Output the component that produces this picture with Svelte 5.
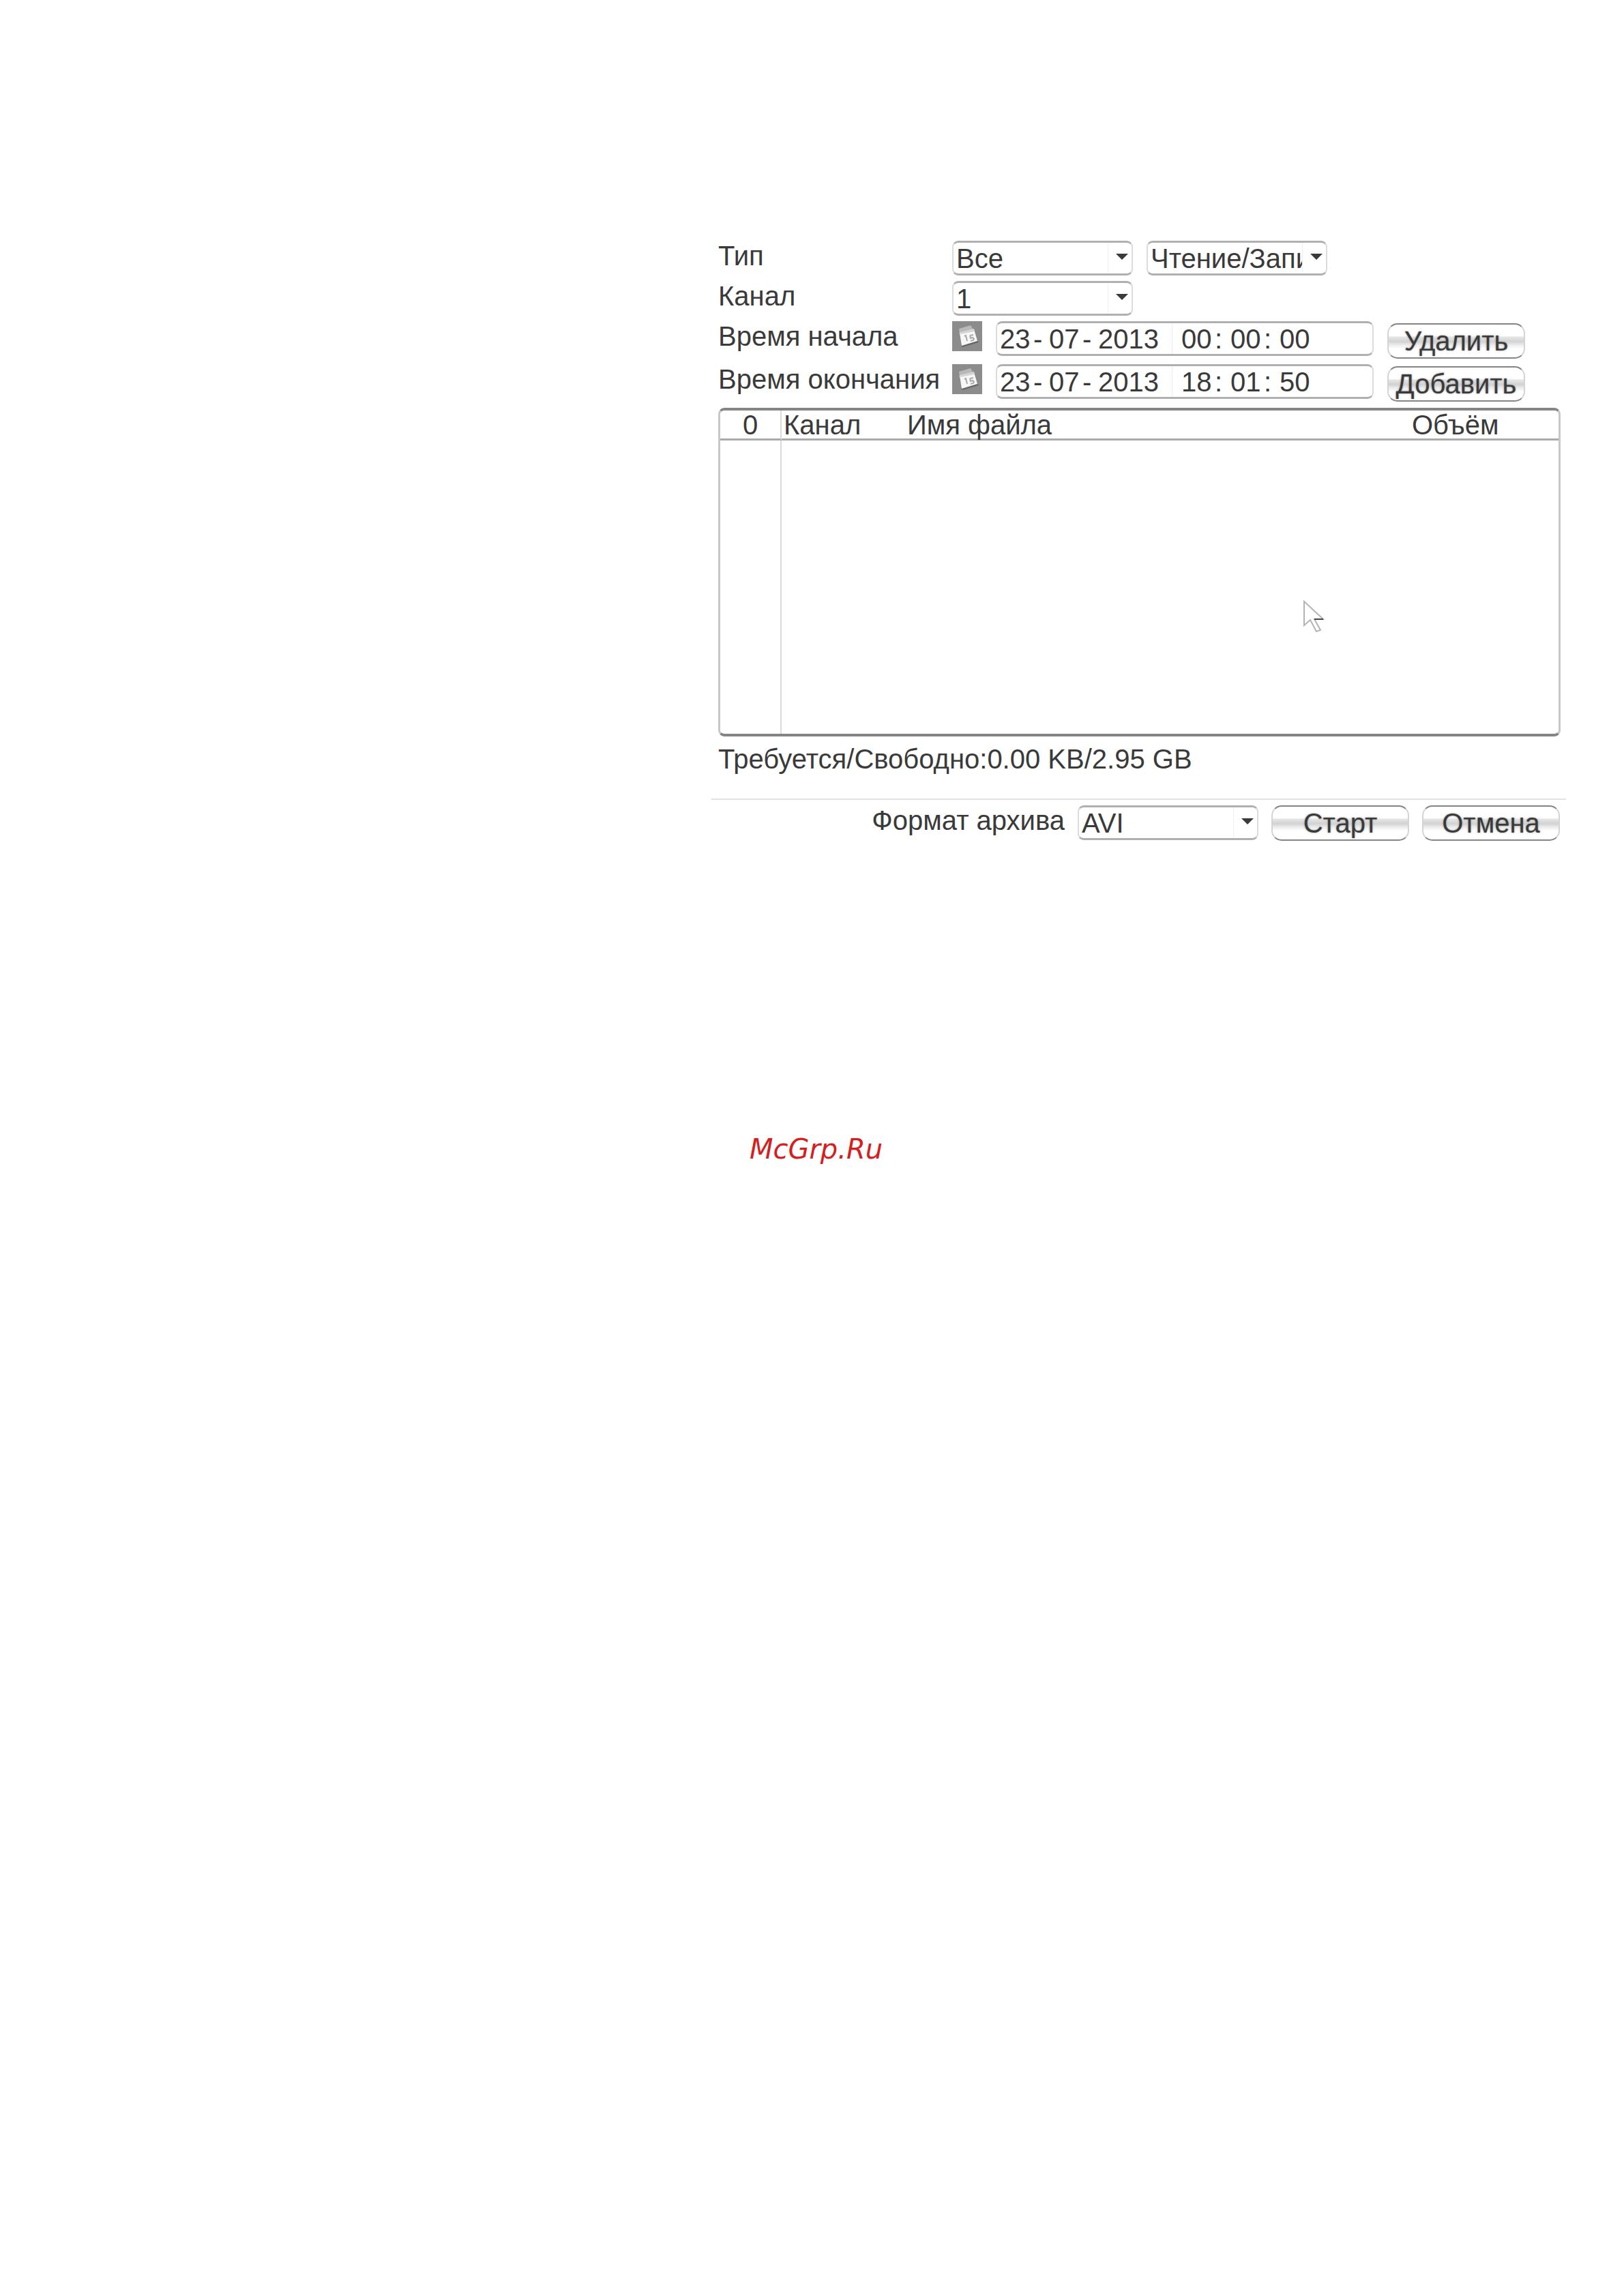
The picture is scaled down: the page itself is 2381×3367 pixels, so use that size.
<script lang="ts">
	interface TimeRow {
		id: string;
		label: string;
		date: string[];
		time: string[];
		action: string;
	}

	const rows: TimeRow[] = [
		{ id: "start", label: "Время начала", date: ["23", "07", "2013"], time: ["00", "00", "00"], action: "Удалить" },
		{ id: "end", label: "Время окончания", date: ["23", "07", "2013"], time: ["18", "01", "50"], action: "Добавить" },
	];

	const dateParts = ["день", "месяц", "год"];
	const timeParts = ["часы", "минуты", "секунды"];

	let fileCount = $state(0);
	let required = $state("0.00 KB");
	let free = $state("2.95 GB");
</script>

{#snippet parts(values: string[], names: string[], separator: string, label: string)}
	{#each values as value, i}
		<input class="part" class:year={value.length === 4} {value} aria-label="{label}: {names[i]}" />
		{#if i < values.length - 1}
			<span class="separator">{separator}</span>
		{/if}
	{/each}
{/snippet}

<main class="page">
	<form class="panel">
		<div class="fields">
			<div class="row">
				<label for="type">Тип</label>
				<span class="select">
					<select id="type"><option>Все</option></select>
				</span>
				<span class="select">
					<select aria-label="Режим"><option>Чтение/Запись</option></select>
				</span>
			</div>
			<div class="row">
				<label for="channel">Канал</label>
				<span class="select">
					<select id="channel"><option>1</option></select>
				</span>
			</div>
			{#each rows as row (row.id)}
				<div class="row time-row">
					<span class="label">{row.label}</span>
					<button type="button" class="calendar" aria-label="Календарь">
						<svg viewBox="0 0 44 44">
							<rect width="44" height="44" fill="#8c8c8c" />
							<path d="M13 35 15 38 39 31 36 27Z" fill="#666" />
							<path d="M10 11 27 6 33 16 11 20Z" fill="#b8b8b8" />
							<path d="M11 17 32 12 37 29 14 36Z" fill="#f8f8f8" />
							<path d="M11 16 32 11 33 15 12 19Z" fill="#d4d4d4" />
							<path d="M18 22 20 21 22 29M26 21 31 20M26 21 27 25 30 24 32 26 31 28 27 29" fill="none" stroke="#aaa" stroke-width="2" />
						</svg>
					</button>
					<div class="datetime" role="group" aria-label={row.label}>
						<span class="date">{@render parts(row.date, dateParts, "-", row.label)}</span>
						<span class="time">{@render parts(row.time, timeParts, ":", row.label)}</span>
					</div>
					<button type="button" class="button">{row.action}</button>
				</div>
			{/each}
		</div>

		<div class="files">
			<table>
				<thead>
					<tr>
						<th class="count">{fileCount}</th>
						<th class="channel">Канал</th>
						<th>Имя файла</th>
						<th class="size">Объём</th>
					</tr>
				</thead>
				<tbody>
					<tr>
						<td class="count"></td>
						<td colspan="3"></td>
					</tr>
				</tbody>
			</table>
			<svg class="pointer" viewBox="0 0 32 50" aria-hidden="true">
				<path d="M2 2V37L11 29L20 46L26 44L17 28H30Z" fill="#fff" stroke="#b4b4b4" stroke-width="2" />
				<path d="M17 28H30" stroke="#444" stroke-width="2" />
			</svg>
		</div>

		<p class="space">Требуется/Свободно:{required}/{free}</p>

		<div class="footer">
			<label for="format">Формат архива</label>
			<span class="select">
				<select id="format"><option>AVI</option></select>
			</span>
			<button type="button" class="button">Старт</button>
			<button type="button" class="button">Отмена</button>
		</div>
	</form>

	<p class="site">McGrp.Ru</p>
</main>

<style>
	:global(body) {
		background: #fff;
	}

	.page {
		display: grid;
		grid-template-columns: 1043fr minmax(0, 1253fr) 85fr;
		padding-top: 353px;
		font-family: "Liberation Sans", Arial, sans-serif;
		font-size: 40px;
		line-height: 44px;
		color: #3a3a3a;
	}

	.panel {
		grid-column: 2;
	}

	.fields {
		display: flex;
		flex-direction: column;
		gap: 8px;
		padding: 0 60px 0 10px;
	}

	.row {
		display: flex;
		gap: 20px;
	}

	.row label,
	.row .label {
		width: 323px;
		flex-shrink: 0;
		white-space: nowrap;
	}

	.time-row {
		height: 55px;
	}

	button,
	input,
	select {
		box-sizing: border-box;
		margin: 0;
		padding: 0;
		font: inherit;
		color: inherit;
		background: none;
		border: 0;
	}

	.select {
		position: relative;
		width: 265px;
		height: 51px;
	}

	.select::before {
		content: "";
		position: absolute;
		top: 4px;
		bottom: 4px;
		right: 36px;
		border-left: 1px solid #f0f0f0;
	}

	.select::after {
		content: "";
		position: absolute;
		top: 19px;
		right: 7px;
		border: 9px solid transparent;
		border-top-color: #3a3a3a;
		border-bottom: 0;
		pointer-events: none;
	}

	select {
		appearance: none;
		display: block;
		width: 100%;
		height: 100%;
		padding: 0 34px 0 4px;
		text-overflow: clip;
	}

	select,
	.datetime {
		border: 3px solid #b0b0b0;
		border-left: 2px solid #dcdcdc;
		border-right: 2px solid #dcdcdc;
		border-radius: 9px;
	}

	.calendar {
		width: 44px;
		height: 44px;
		flex-shrink: 0;
	}

	.calendar svg {
		display: block;
	}

	.datetime {
		display: flex;
		flex: 1;
		box-sizing: border-box;
		height: 51px;
		min-width: 0;
	}

	.date,
	.time {
		display: flex;
		align-items: center;
	}

	.date {
		width: 252px;
		padding-left: 4px;
	}

	.time {
		padding-left: 13px;
		border-left: 1px solid #ececec;
	}

	.part {
		width: 46px;
		height: 44px;
	}

	.year {
		width: 91px;
	}

	.separator {
		box-sizing: border-box;
		width: 26px;
		padding-left: 3px;
	}

	.button {
		width: 202px;
		height: 52px;
		flex-shrink: 0;
		align-self: flex-end;
		border: 2px solid #858585;
		border-left-color: #d4d4d4;
		border-right-color: #d4d4d4;
		border-radius: 15px;
		background: linear-gradient(#fff 34%, #e6e6e6 38%, #d2d2d2 52%, #ececec 62%, #fff 74%);
		text-shadow: 0 0 3px #999;
	}

	.files {
		position: relative;
		margin: 9px 8px 0 10px;
		border: 4px solid #858585;
		border-left: 3px solid #c8c8c8;
		border-right: 3px solid #c8c8c8;
		border-radius: 9px;
	}

	table {
		width: 100%;
		table-layout: fixed;
		border-collapse: separate;
		border-spacing: 0;
	}

	th {
		height: 41px;
		padding: 0;
		line-height: 40px;
		font-weight: normal;
		text-align: left;
		border-bottom: 3px solid #ababab;
	}

	td {
		height: 430px;
		padding: 0;
	}

	.count {
		box-sizing: border-box;
		width: 90px;
		text-align: center;
		border-right: 2px solid #dadada;
	}

	th.channel {
		width: 181px;
		padding-left: 3px;
	}

	th.size {
		width: 215px;
	}

	.pointer {
		position: absolute;
		top: 278px;
		left: 69.5%;
		width: 32px;
		height: 50px;
	}

	.space {
		margin: 8px 0 33px 10px;
		line-height: 50px;
	}

	.footer {
		display: flex;
		justify-content: flex-end;
		gap: 19px;
		padding: 8px 9px 0 0;
		border-top: 2px solid #e2e2e2;
	}

	.site {
		grid-column: 1 / -1;
		margin: 428px 0 0;
		padding-left: 12px;
		font-family: "DejaVu Sans", sans-serif;
		font-style: oblique;
		line-height: 48px;
		text-align: center;
		color: #d42020;
	}
</style>
